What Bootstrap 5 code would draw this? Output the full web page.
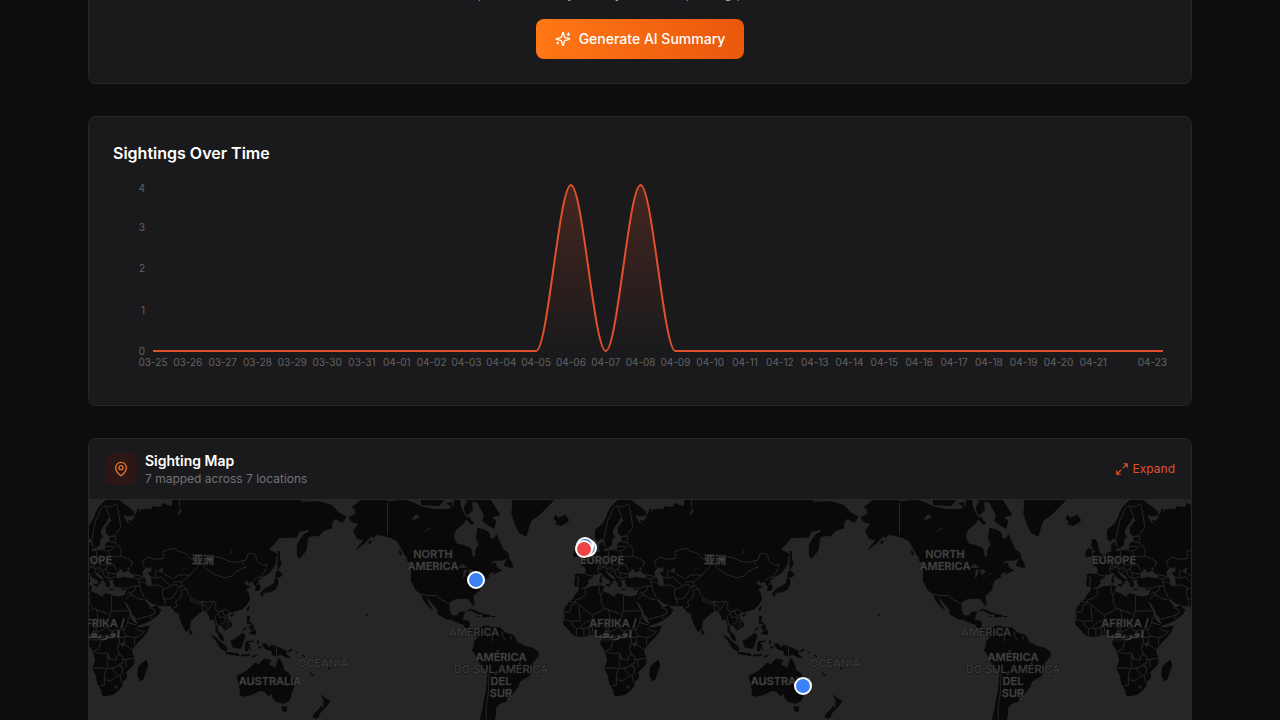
<!DOCTYPE html>
<html lang="en" data-bs-theme="dark">
<head>
<meta charset="utf-8">
<meta name="viewport" content="width=device-width, initial-scale=1">
<title>Sightings dashboard</title>
<link href="https://cdn.jsdelivr.net/npm/bootstrap@5.3.0/dist/css/bootstrap.min.css" rel="stylesheet">
<style>
  body { background: #0d0d0d; color: #fafafa; font-family: Inter, "Noto Sans", sans-serif; font-size: 14px; line-height: 20px; overflow-x: hidden; }
  .page { max-width: 1152px; gap: 32px; }
  .panel { background: #1a1a1c; border: 1px solid #262629; border-radius: 8px; overflow: hidden; }
  .panel-cut { border-top: 0; border-radius: 0 0 8px 8px; margin-top: -17px; }
  .muted-text { color: #a1a1aa; }
  .btn-summary { height: 40px; padding: 0 19px; border: 0; border-radius: 8px; font-size: 14px; line-height: 20px; font-weight: 500; color: #fff; background: linear-gradient(90deg, #ff7716, #ea580c); }
  .btn-summary:hover { color: #fff; }
  .panel-title { font-size: 16px; line-height: 24px; font-weight: 600; }
  .chart { display: block; width: 100%; height: 200px; overflow: visible; }
  .chart text { font-size: 10px; fill: #626266; }
  .map-head { border-bottom: 1px solid #262629; padding: 12px 16px; }
  .pin-box { width: 32px; height: 32px; border-radius: 8px; background: #2a1716; color: #f0742a; }
  .map-title { font-size: 14px; line-height: 20px; font-weight: 600; }
  .map-sub { font-size: 12px; line-height: 16px; color: #71717a; }
  .btn-expand { font-size: 12px; line-height: 16px; color: #e0502b; border: 0; padding: 0; background: none; }
  .btn-expand:hover { color: #f97316; }
  .icon-line { fill: none; stroke: currentColor; stroke-width: 2; stroke-linecap: round; stroke-linejoin: round; }
  .world { display: block; width: 100%; height: 400px; background: #262626; }
  .world .land { fill: #090909; stroke: #090909; stroke-width: 1; stroke-linejoin: round; }
  .world .water { fill: #262626; }
  .world .frontier { fill: none; stroke: #272727; stroke-width: 1; stroke-linejoin: round; }
  .world text { font-family: Inter, "Noto Sans CJK SC", "DejaVu Sans", sans-serif; font-size: 11px; font-weight: 600; fill: #414141; text-anchor: middle; stroke: #141414; stroke-width: 1px; paint-order: stroke; }
  .world .faint { font-weight: 500; fill: #3c3c3c; }
  .world .pin { stroke: #fff; stroke-width: 2; }
</style>
</head>
<body>
<main class="page container-fluid px-4 pb-4 d-flex flex-column">
  <section class="panel panel-cut px-4 pb-4 text-center">
    <p class="muted-text mb-3">AI-powered analysis of your full reporting performance</p>
    <button type="button" class="btn btn-summary d-inline-flex align-items-center gap-2">
      <svg class="icon-line" width="16" height="16" viewBox="0 0 24 24" aria-hidden="true"><path d="M9.937 15.5A2 2 0 0 0 8.5 14.063l-6.135-1.582a.5.5 0 0 1 0-.962L8.5 9.936A2 2 0 0 0 9.937 8.5l1.582-6.135a.5.5 0 0 1 .963 0L14.063 8.5A2 2 0 0 0 15.5 9.937l6.135 1.581a.5.5 0 0 1 0 .964L15.5 14.063a2 2 0 0 0-1.437 1.437l-1.582 6.135a.5.5 0 0 1-.963 0zM20 3v4M22 5h-4M4 17v2M5 18H3"/></svg>
      Generate AI Summary
    </button>
  </section>

  <section class="panel p-4">
    <h2 class="panel-title mb-3">Sightings Over Time</h2>
    <svg class="chart" id="chart" role="img" aria-label="Sightings per day"></svg>
  </section>

  <section class="panel">
    <header class="map-head d-flex align-items-center gap-2">
      <span class="pin-box d-flex align-items-center justify-content-center">
        <svg class="icon-line" width="16" height="16" viewBox="0 0 24 24" aria-hidden="true"><path d="M20 10c0 4.993-5.539 10.193-7.399 11.799a1 1 0 0 1-1.202 0C9.539 20.193 4 14.993 4 10a8 8 0 0 1 16 0"/><circle cx="12" cy="10" r="3"/></svg>
      </span>
      <div class="me-auto">
        <h2 class="map-title mb-0">Sighting Map</h2>
        <p class="map-sub mb-0">7 mapped across 7 locations</p>
      </div>
      <button type="button" class="btn btn-expand d-inline-flex align-items-center gap-1">
        <svg class="icon-line" width="14" height="14" viewBox="0 0 24 24" aria-hidden="true"><path d="M15 3h6v6M9 21H3v-6M21 3l-7 7M3 21l7-7"/></svg>
        Expand
      </button>
    </header>
    <svg class="world" viewBox="89 500 1102 400" preserveAspectRatio="xMidYMin slice" role="img" aria-label="World map of sightings">
      <defs>
        <g id="tile">
          <path class="land" id="land"/>
          <path class="water" id="water"/>
          <path class="frontier" id="frontier"/>
        </g>
        <g id="names">
          <text x="433" y="558">NORTH</text><text x="433" y="570">AMERICA</text>
          <text x="715" y="564">亚洲</text>
          <text x="602" y="564">EUROPE</text>
          <text x="613" y="627">AFRIKA /</text><text x="613" y="638">افريقيا</text>
          <text x="474" y="636" class="faint">AMERICA</text>
          <text x="501" y="661">AMÉRICA</text><text x="501" y="673" class="faint">DO SUL,AMÉRICA</text>
          <text x="501" y="685">DEL</text><text x="501" y="697">SUR</text>
          <text x="835" y="667" class="faint">OCEANIA</text>
          <text x="782" y="685">AUSTRALIA</text>
        </g>
      </defs>
      <use href="#tile" x="-512"/><use href="#tile"/><use href="#tile" x="512"/>
      <use href="#names" x="-512"/><use href="#names"/><use href="#names" x="512"/>
      <circle class="pin" cx="476" cy="580" r="8" fill="#3b82f6"/>
      <circle class="pin" cx="803" cy="686" r="8" fill="#3b82f6"/>
      <circle class="pin" cx="588" cy="548" r="8" fill="#7c9cc9"/>
      <circle class="pin" cx="585" cy="546" r="8" fill="#3b6fb6"/>
      <circle class="pin" cx="584" cy="549" r="8" fill="#ef4444"/>
    </svg>
  </section>
</main>
<script src="https://cdn.jsdelivr.net/npm/bootstrap@5.3.0/dist/js/bootstrap.bundle.min.js"></script>
<script>
  // Daily counts, 25 March to 23 April
  const days = [];
  for (let d = 25; d <= 31; d++) days.push(['03-' + d, 0]);
  for (let d = 1; d <= 23; d++) days.push(['04-' + String(d).padStart(2, '0'), d === 6 || d === 8 ? 4 : 0]);

  function drawChart() {
    const svg = document.getElementById('chart');
    const width = svg.clientWidth, left = 40, right = width - 4, top = 4, bottom = 170;
    const step = (right - left) / (days.length - 1);
    const px = i => left + i * step, py = v => bottom - v / 4 * (bottom - top);
    let line = `M${px(0)},${py(days[0][1])}`;
    for (let i = 1; i < days.length; i++) {
      const y0 = py(days[i - 1][1]), y1 = py(days[i][1]);
      line += `C${px(i - 1) + step / 3},${y0} ${px(i) - step / 3},${y1} ${px(i)},${y1}`;
    }
    let out = `<defs><linearGradient id="fade" x1="0" y1="0" x2="0" y2="1"><stop offset="0" stop-color="#e0502b" stop-opacity=".22"/><stop offset="1" stop-color="#e0502b" stop-opacity="0"/></linearGradient></defs>`;
    out += `<path d="${line}L${right},${bottom}L${left},${bottom}Z" fill="url(#fade)"/><path d="${line}" fill="none" stroke="#e0502b" stroke-width="2"/>`;
    for (let v = 0; v <= 4; v++) out += `<text x="32" y="${Math.max(py(v), 7) + 4}" text-anchor="end">${v}</text>`;
    const every = Math.ceil(32 / step), last = days.length - 1;
    days.forEach(([name], i) => {
      if (i === last) out += `<text x="${width}" y="185" text-anchor="end">${name}</text>`;
      else if (i % every === 0 && px(i) + 20 < width - 32) out += `<text x="${px(i)}" y="185" text-anchor="middle">${name}</text>`;
    });
    svg.innerHTML = out;
  }
  drawChart();
  addEventListener('resize', drawChart);

  // Outlines as longitude,latitude pairs, one shape per line
  const land = `
28,71 25,71 20,70 16,68.5 14,67 12.5,65.5 10.5,64 8.5,63.2 5.3,62 5,60 5.5,58.8 7,58 9,58.8 10.5,59.3 11.2,59 12,57.5 12.8,55.6 14.3,55.5 14.5,56 16,56.3 16.6,57.5 17,58.6 18.8,59.8 17.2,60.7 17.3,62 19,63.2 21.3,64.5 22.2,65.7 24.5,65.8 25.3,65 23,63.8 21.3,62.8 21.4,61 23,60 26,60.3 29.5,60.2 28,59.5 24,59.3 23.5,58.7 24.4,58 24.2,57.2 22,57.6 21,56.8 21,55.3 20,54.5 18.7,54.5 16.5,54.4 14,54 11,54 10.8,56 10.4,57.6 8.3,57 8.2,55.5 8.8,54 7,53.5 5,53.2 4,52 2.5,51.1 1.6,50.3 0,49.5 -1.5,49.6 -1.6,48.7 -4.7,48.5 -4.5,47.9 -2,47 -1.2,45.5 -1.5,43.5 -4,43.4 -8,43.7 -9.2,43 -8.8,41 -9.4,38.8 -8.9,37 -6.5,37 -5.6,36.1 -2,36.8 -0.7,37.7 0.1,38.8 -0.4,39.6 0.8,41 3.2,42 3.1,43.1 5,43.4 7.5,43.8 9,44.4 10.2,43.8 11,42.4 13,41.2 14.5,40.7 15.8,40 16,38.2 16.6,38.5 17.1,39.1 16.6,40.2 18.3,39.9 18.4,40.3 16,41.6 14,42.7 13.4,43.8 12.4,44.8 12.5,45.5 13.7,45.6 13.8,44.9 15.2,44.2 17.5,43 19.4,41.8 19.4,40.5 21,38.8 21.3,37.3 22.7,36.5 23.1,37.5 24,38 23,39.2 22.8,40.4 24,40.7 26,40.8 26.7,40.3 28.9,41 28,42 27.8,43 28.8,44.5 30.7,46.3 33,46.1 32.6,45.4 33.6,44.5 35.3,45.1 36.5,45.4 35,46.3 38,47.2 39.2,47.2 38,46.5 37.8,45.6 37,45 39,44 41.5,42.5 41.5,41.5 38.5,41 36,41.6 33,42 31,41.1 29.2,41.2 29,40.5 26.8,40.2 26.2,39.2 27,38 27.6,36.7 30.6,36.8 32.5,36.1 34.5,36.7 36,36.7 35.7,35 34.8,32.5 34.2,31.3 32.5,31.1 32.5,30 33.5,28.3 34.2,27.8 34.9,29.4 35,28 37,25.5 38.8,22.5 39.2,21 41,18.5 42.6,16.5 43.2,13 45,12.8 48.5,14 52,15.6 55,17.5 57.8,19.5 59.8,22.5 58.5,23.7 56.8,24.4 56.3,26.2 54.5,24.2 51.5,24.2 51.5,25.8 50.2,25.7 50,26.7 48.5,28.4 48,30 50,30.1 51.2,28 54.5,26.6 57,26.9 57.5,25.6 61.5,25.2 66.5,25.4 67.5,23.8 69,22.3 70.5,20.8 72.7,21.2 72.9,19 73.5,16 74.8,13 76.3,10 77.5,8 79.8,10.3 80.2,13 80.3,15.5 82.3,16.7 85,19.5 87,21 89,21.9 90.5,22.5 92,21.2 94,18.5 94.4,16 97,16.8 98,14 98.6,11.5 98.3,8.2 100.3,6 101.3,3 103.5,1.4 103.4,4 102,6.2 100.5,7.3 99.3,9.3 99.2,10.5 100,13.3 101,12.7 102.5,12 105,8.7 106.7,10.4 109.2,11.7 109.2,13.5 107,17 105.7,19 106.8,20.6 108.3,21.6 110,21 111,21.5 114,22.4 117,23.5 119.5,25.5 121.8,29 121.8,31 120.5,34 119.2,35 122.4,37 119,37.5 117.8,39 121.5,40.8 121.3,39 124.3,40 125,38 126.6,37 126.4,34.5 129.2,35.3 129.3,37 127.5,39.6 130.7,42.3 133,42.8 135.5,44 138.5,46.7 140.4,49 140.4,51.5 141.3,53 138,54 135.2,54.7 140,57.5 143,59.3 149,59.5 155,59.4 157,61.5 160.5,61.8 164,62.5 163.3,61 160.5,60.6 157,58 155.6,56 155.7,53 156.7,51 160,53 162,55 162.5,57.8 163.2,59.5 166,60 170.5,60 175,62 179.5,62.5 180,64.5 182.5,65.5 187,64.3 190,66 185,67 180,69 170,70 160,69.8 150,71.5 140,72.5 120,73 80,73 74,72 73.5,69 74.5,67.5 72,66.3 71,66.6 72.8,68 72,70 69,73 68,69 66,68.8 61,69.5 60,68.5 54,68.7 53,68 46,68 45,67 44,66.2 44,68.3 42,66.5 40,65 39.5,64.6 37,65 38,64 36.5,64 34.7,65 32.5,66.9 36,66.3 40,66.3 41,67 38,68.3 33,69.5
-5.9,35.8 -2,35.1 3,36.9 10,37.3 11,36.8 10,34.2 15,32.3 19,30.3 20,32.6 23,32.5 25,31.6 29,30.9 32.3,31.2 32.6,29.9 35.5,24 37.2,21 37.4,18.7 39.5,15.5 43,12.5 43.2,11.5 44.5,10.4 51.2,11.8 50,8 47,4 42,-1 39,-5 39.5,-7 40.7,-11 40.6,-15 35,-20 35.5,-24 32.9,-26 32.2,-29 28,-33 25.5,-34 20,-34.8 18.4,-34 18,-31.5 15.2,-27 14.4,-22.5 11.8,-17.5 13.8,-12 12.3,-6 9,-1 9.6,3.8 8.5,4.6 6,4.3 4,6.4 1,6 -2,4.9 -7.5,4.4 -11.5,6.9 -13.3,9 -15,11 -16.8,12.5 -17.4,14.7 -16.3,16.5 -16.2,19 -17,21 -16,24 -13,27.8 -9.8,29.7 -9.7,31.5 -6.8,34
49.3,-12 50.4,-15.5 47,-25 45,-25.5 43.3,-22 44.4,-16
-5,50.1 1.3,51.2 1.6,52.7 0,53 -1.5,55 -2,57.5 -3.5,58.6 -5,58.6 -6,56.5 -4.7,54.8 -3,54 -4.5,53.2 -5,51.8 -3,51.4
-6,52.2 -10,51.7 -9.8,54 -8,55.2 -5.6,54.5
-24,65.5 -22.5,66.4 -21,65.4 -20,65.8 -16,66.5 -13.6,65 -15,64.3 -19,63.4 -22.6,63.9 -22,64.8
-54,73 -53,69 -53.5,66.8 -51,63.5 -48,61 -43.5,59.9 -42,62.5 -40,65 -36,66 -30,68.2 -25,70 -20,73
-168,65.7 -163,67 -164,68.5 -166,68.5 -156,71.3 -140,70 -128,70.3 -115,68.5 -108,68 -98,68 -94,69 -94,72 -90,72 -90,69 -88,67.5 -86,66 -87,64.3 -93,62 -94.7,60 -94,58.7 -92.5,57 -88,56.5 -82.3,55 -82,53 -80,51.2 -78.8,52.5 -79,54.5 -76.5,57 -78.5,59 -77.5,62.5 -73,62 -69.5,61 -69,59 -66,58.8 -64.5,60.3 -62,57.5 -60,55 -56,53 -56,51.5 -60,50.2 -66.5,50.2 -69.5,48 -65,49 -64.5,47 -61,45.5 -64,44.5 -66,43.5 -66.5,45 -70,43.5 -70,41.8 -74,40.5 -76,37 -76,35 -81,31.5 -80,27 -80.5,25.2 -82.5,27.5 -84,30 -89.5,30 -94,29.5 -97.3,27.5 -97.7,22.5 -96,19 -92,18.6 -90.5,21 -87,21.4 -88.2,17 -88,15.8 -83.3,15 -83.7,11 -81.5,8.9 -79.5,9.5 -77.4,8.6 -78,7.2 -80.3,7.4 -83,8.2 -85.8,10.3 -87.5,13 -92,14.5 -95,16.1 -100,17 -105.5,20 -105.5,22.5 -109,26.5 -112.5,30 -114.7,31.7 -112.8,28 -111,25.5 -109.5,23.2 -112,25 -115,28 -116,30 -117.2,32.8 -120.5,34.5 -122.5,37.5 -124.3,40.3 -124,46 -123,48.8 -127,51 -130.5,54.5 -134,58 -138,59.2 -144,60.1 -148,60.5 -151.5,59.3 -151,61 -154,59 -158,57 -163,54.8 -157.5,58.5 -162,59 -165,61.5 -161,64 -166,64.5
-86,69.6 -82,69.8 -81.3,67.8 -85,66.5 -87,68
-62,66.5 -68,66 -65,64.8 -66,62.5 -72,64 -74,64.8 -73,66.5 -78,70 -85,70 -88,73 -70,73 -68,70
-86,65.5 -82,63.8 -80.5,64 -84,66
-117,69.3 -105,69 -102,70 -105,73 -118,73
-99,69.5 -96,68.8 -96,69.8
-59,47.7 -53,46.8 -53.5,48.5 -56,51.5
-128,50.6 -125,49.8 -123.6,48.4
-133,54 -131.7,54 -131.2,52.3
-154.5,57.6 -152.3,58.2 -153.5,57
-85,22 -82,23.2 -77,21 -74.3,20.2 -77.5,19.9 -82,22.5
-74,19.8 -69,19.2 -68.5,18.3 -74,18.2
-78,18.4 -76.4,18.1 -77.5,17.9
-67,18.4 -65.7,18.3 -67,18
-77.4,8.6 -75,11 -71.5,12.2 -72,10 -70,12 -68,10.6 -62,10.6 -58,7 -52,5 -50,0.5 -44,-2.5 -38.5,-3.7 -35,-6.5 -35,-9 -39,-13.5 -39.5,-19 -41.5,-22.5 -48,-26 -49,-29 -53.5,-34 -57,-35 -57.5,-38 -62,-39 -65,-41.5 -65,-45 -66,-47.5 -69,-51 -68,-54 -74,-54 -75.5,-47 -73.5,-40 -71.5,-32 -70.3,-20 -75,-15.5 -79,-8 -81.2,-5 -80,-2.5 -80,0.8 -77.5,3.5 -78,7
113.5,-22.5 114.2,-26.5 115.7,-32 115,-34.2 118,-35 123.5,-34 129,-31.7 132,-32 135.5,-34.8 138,-33 138.3,-35.5 140.5,-38 146,-39 150,-37.3 151.5,-33 153.5,-28.5 153,-25 149,-20.5 146,-18.8 145.3,-15 142.7,-10.7 141.5,-13.5 140.8,-17.5 137,-16 135.5,-14.8 137,-12.2 132.5,-11.3 130,-13.5 128.5,-15 126,-14 122.5,-17.5 119,-20
144.7,-40.8 148.3,-41 147.5,-43.5 145.5,-43
131,-0.8 134,-0.8 135,-3.3 138,-1.6 141,-2.6 145,-4.4 148,-6 147.5,-7.5 150.5,-10.5 147,-9.5 144,-7.7 141,-9.1 138,-8.2 138,-5.5 133,-4
109,1.5 111.5,2.5 115,5 117,7 119,5 117.5,1 116,-3.8 110.3,-2.9
95.3,5.5 98,4 103.5,-1 106,-3 105.7,-5.8 102,-4 98.7,1.5
105.2,-6.8 108.5,-6.8 114.5,-7.8 114.4,-8.7 107,-7.7
119,-3 120,1 125,1.4 120.5,0.4 121,-1 123,-1 121.8,-2 122.7,-5 121,-3 120.3,-5.5 119.5,-5.5
116,-8.4 122.5,-8.3 122,-8.8 117,-9
123.6,-10.2 127,-8.5 125,-9.2
127.6,-0.5 128,2 128.6,0.5
128,-3 130.5,-3.1 128.5,-3.5
149,-5.7 152,-4.3 150.5,-6.2
155,-6 156,-6.8 155.4,-6.8
159.5,-8.4 161,-9.6 160,-9.6
164,-20.2 167,-22.2 166,-22.1
177.3,-17.6 178.6,-17.7 178,-18.2
120.5,18.5 122.2,18.4 121.5,15 124,12.8 120.5,14
122,7 125.5,9.8 126.5,7 125.5,5.8
122,11.7 125,12.3 124.5,10 122.5,9.5
117.3,8.6 119.5,11 118.5,9.3
120.2,23 121.7,25.2 120.9,22
108.7,19.3 111,20 109.5,18.2
80,9.5 81.8,7 80.2,6
131,34 132.5,35.4 136.7,37.3 139.5,38.5 140,41 141.5,41.3 142,39.5 140.8,36 139,34.8 135.7,33.5 135,34.6
130,33.5 132,33.3 131,31.2 130.2,31.5
132.5,33.8 134.5,34.1 133,32.9
140,42 141.8,45.5 145.3,43.3 143.3,42
142,46 142.2,54 143,54 143.2,50 144.5,49 142.8,46.7
172.8,-34.5 175.5,-36.7 178.5,-37.7 177,-39.4 175.2,-41.6 174.8,-41 173.8,-39.3 174.9,-38
172.8,-40.6 174.2,-41.7 171,-44.5 170.5,-46 168.5,-46.7 166.5,-46 168.5,-44
-156,20 -155,19.5 -155.7,19
12.5,38 15.5,38.2 15,36.8
8.3,41 9.6,41 9.5,39.2 8.5,39
8.7,42.4 9.4,42.8 9.2,41.5
23.6,35.5 26.2,35.2 24,35
32.4,35 34.5,35.6 33.5,34.7
11.2,55.6 12.5,55.9 12,55`;
  const water = `
47,43 47,45 49,46.5 53,46.8 53,45 51,44.5 50.5,44 53,42 52.8,40 54,37 50,37.3 49,38.5 49.3,40.3
58.5,45 60,46.6 61.5,46.2 60,44
74,45.3 76,46.7 79,46.6 76,46.3
104,51.6 108,53 110,55.6 109,53
31.8,0.3 34,0.3 33.5,-2.5 31.8,-2
-117,61 -113,62.3 -109,62.8 -112,62
-124,65.2 -121,66.8 -118,66 -121,65.2
-98.5,53.5 -97,52 -96.5,50.5 -98,51.5
-92,46.7 -88,48.6 -84.6,46.7 -88,46.6
-88,42 -87.3,45.5 -85,45.8 -86.3,43 -87,41.8
-84.5,45.9 -81.5,45.8 -80.3,44.6 -82.4,43.2 -83.6,43.8
-83,41.7 -79,42.9 -80,42.3
-79.6,43.4 -76.3,44 -76.8,43.4`;
  const frontier = `
49,46.5 47,48 47,50 51,51.5 55,50.7 59,50.8 61.5,51 61,54 69,55.3 71,54.2 74,53.8 77,53.3 80,51 83.5,51 87.3,49.2 85.5,47 82.5,45.3 80.3,43 74,43.2 71,42.5 68,41 66,42 62,43.5 59,45.5 56,45 56,41.3 53,42
56,41.3 60,42.2 63,39.5 66.5,37.4
54,37.3 57,38 61,36.5 61.3,35.5 64.5,36.2 66.5,37.4 71,38 71.5,36.7 74.8,37.3 73.5,39.5
80.3,43 76,40.5 73.7,39.5 69.5,39.7 68,38.5
61.5,29.5 66.3,29.8 69.5,32 71,34.5 74.8,37.3 77.8,35.5
61.3,35.5 60.8,33 61.5,29.5 63,27 61.5,25.2
68.2,23.8 71,25 70,27.8 73,30 74.5,32.5 74,34.5 77.8,35.5 79,32.5 81,30.2 86,28 88.8,28 92,27.7 97.3,28.2
81,30.2 80.3,28.8 84,27.3 88,26.4 88.8,28 89,21.9
88.5,26.3 92,25 92,21.2
93,22.5 94.5,25.5 97.3,28.2 98.7,25.5 97.6,24 99.2,22 101,21.6 100,20.4 97.8,18.5 98.5,15 99.5,11.5
100,20.4 101,17.6 104,18 105.5,14.5 102.5,13.6 102.5,12
101,21.6 105,23 108,21.6
102.5,22.4 104,20 107,16 107.5,12.5 105,10.5
87.3,49.2 92,50.7 98,51.8 102,51.3 107,49.8 112,49.2 116.5,49.8 119.5,50.2 121,53.2 125.5,53 127.5,50 131,47.8 134.5,48.3 133,45.2 131,43
87.3,49.2 91,46.5 95.5,44.2 100,42.6 105,41.6 110,42.6 112,44.5 117,46.6 119.7,46.8 116.5,49.8
124.3,40 127,41.7 130.7,42.3
126.6,37.8 128.4,38.6
36,36.2 42.4,37.2 44.8,37.2 44.5,39.7 43.5,41.1 41.5,41.5
44.8,37.2 46,34 48,30.5
44.5,39.7 48,39 49,38.5
43.5,41.1 46.5,41.5 48.5,41.9 44.5,42.7 40,43.4
42.4,37.2 41,34.4 38.8,33.4 36,32.5
38.8,33.4 39,32 44.7,29.2 47.5,29.5
39,32 37,31 35,29.4
42.7,16.5 46,17.3 52,19 53,16.6
52,19 55,20 55.5,22.7 51.5,24.3
25,31.6 25,22 37,22
10,34 9,31.8 9.5,26.5 11.5,24 14,23 24,19.5 25,22
8.3,37 7.6,33.5 9,31.8
-2,35 -1.5,32.3 -5,30 -8.7,28.7 -8.7,27.3 -5,25 3,19 12,23.5
-8.7,27.3 -13,27.8
-8.7,26 -12,26 -12,23.4 -13,21.3 -17,21
-6.5,25 -5.5,15.5 -12,15 -16.3,16.5
3,19 4,16 0,15 -3,13.5 -5.5,10.5 -8,10.2 -11,12.3 -12,15
-8,10.2 -8.3,7 -7.5,4.4
-3,10 -2.8,5
0.5,11 1,6
-5.5,10.5 -3,10 0.5,11 3.6,11.7
3.6,11.7 4,13.5 8,13 13.5,13.5 15.5,16.5 15,21 14,23
4,16 3.6,11.7 2.7,6.4
8.6,4.8 12,7.5 14,12
24,19.5 22.5,15 22,11 15,7.5 14,12 13.5,13.5
22,11 27,5.2 18.5,4.3 16,2.2 15,7.5
9.5,2.2 16,2.2
37,18 36,13.5 34,9.5 27,9 24,8.5 22,11
34,9.5 33,8 36,4.5 31,4 27,5.2
36,14.5 42.5,12.5
36,4.5 42,4 45,5 48,8 43,9 42,11
34,4.5 34,-1 39,-4.7
41.5,4 41,-1.5
31,4 30,-1 29.3,-4.5 30.8,-8.3 28.5,-9 28.4,-12 24,-11 22,-7 17,-7.5 12.5,-6 16,-4 18.5,4.3
30,-1 34,-1
22,-11 24,-11 22,-13 22,-16.5 23.5,-17.6 12,-17.2
22,-7 22,-11
21,-18 20,-22 20,-28.5 16.5,-28.6
20,-25 25,-25.7 29.5,-22.3 25.3,-17.8 30,-15.6 33,-17 32.5,-21 31.3,-22.4 29.5,-22.3
23.5,-17.6 25.3,-17.8
33,-17 30.3,-15 33,-14 33,-9.5 31,-8.3
33,-11.5 34.7,-11.5 40.5,-10.7
34.7,-11.5 35.5,-16
31.3,-22.4 32,-26.8
27,-29.7 29,-29 28.5,-30.5 27,-29.7
11.5,59 12.3,62 14,65 18,68.5 20.5,69 24,65.8
20.5,69 25,68.7 28.5,69.5 30,67 31.5,62.8 28,60.5
28,59.5 27.5,57.5 31,55.5 32,54 31,52 34.5,51.3 40,49.5 38.5,47
21,56 26,56
24.3,57.9 27.5,57.5
23,54 26.5,55.5 28,56
14.3,54 14.8,51 18.8,49.5 22.8,49 23.5,52.5 22.8,54.3 19.5,54.3
23.5,51.6 31,52
6,53 6,50 8,49 7.6,47.6 13,47.5 14,48.7 12.2,50.3 14.8,51
2.5,51 6,49.5
7.6,47.6 6.8,46 7.5,43.8
-1.8,43.3 3.1,42.5
-8.8,42 -6.5,41.8 -7.3,37.2
7,46 10.5,46.8 13.7,46.5 13.7,45.6
13.7,46.5 16.5,46.5 18.8,45.8 21,46 22.7,48 17,48 16.5,46.5
22.7,48 26.5,48.2 28.2,45.5
21,46 22.5,44 28.5,43.8
16,46 16,45 19,45 19.2,43.5 20.5,42 22.5,41.3
22.5,44 22.5,41.3 26.3,41.7 28,42
-141,60.3 -141,69.9
-117.2,32.6 -111,31.4 -106.5,31.8 -103,29 -100,28 -97.3,26
-72,11.5 -72.5,7.5 -67.5,6 -67,1.2
-60,8 -60,5 -58,2
-54,5 -54,2.3
-69,-18 -70,-25 -70,-33 -71.5,-40 -71.8,-50
141,-2.6 141,-9`;

  // Web Mercator, one world copy is 512 units wide
  const scale = 512 / (2 * Math.PI), rad = Math.PI / 180;
  const project = pair => {
    const [lon, lat] = pair.split(',').map(Number);
    const x = 588 + lon * rad * scale;
    const y = 643 - Math.log(Math.tan(Math.PI / 4 + lat * rad / 2)) * scale;
    return x.toFixed(1) + ' ' + y.toFixed(1);
  };
  const toPath = (text, end) => text.trim().split('\n').map(row => 'M' + row.trim().split(' ').map(project).join('L') + end).join('');
  document.getElementById('land').setAttribute('d', toPath(land, 'Z'));
  document.getElementById('water').setAttribute('d', toPath(water, 'Z'));
  document.getElementById('frontier').setAttribute('d', toPath(frontier, ''));
</script>
</body>
</html>
